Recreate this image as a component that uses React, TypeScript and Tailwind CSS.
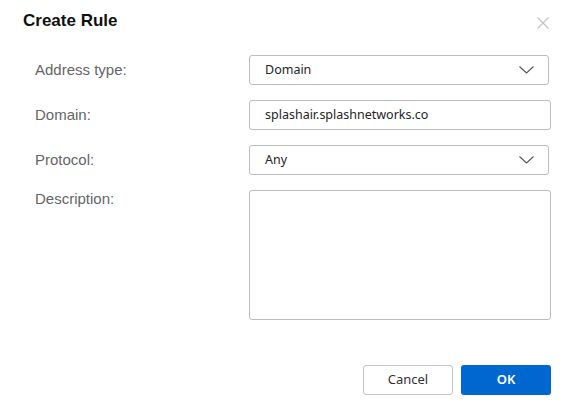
function Chevron() {
  return (
    <svg width="15" height="8" viewBox="0 0 15 8" fill="none" className="shrink-0">
      <path d="M0.5 0.5 L7.5 7 L14.5 0.5" stroke="#555" strokeWidth="1.1" />
    </svg>
  );
}

function Select({ value }: { value: string }) {
  return (
    <div className="flex h-[30px] w-[300px] items-center justify-between rounded-[3px] border border-[#bdbdbd] pl-[15px] pr-[14px] text-[12.5px] text-[#252525]">
      <span>{value}</span>
      <Chevron />
    </div>
  );
}

function Label({ children, top }: { children: string; top?: boolean }) {
  return (
    <div
      className={
        "w-[249px] shrink-0 pl-[35px] text-[15px] text-[#666] font-['Liberation_Sans',Arial,sans-serif] " +
        (top ? "leading-[18px]" : "leading-[30px]")
      }
    >
      {children}
    </div>
  );
}

export default function App() {
  return (
    <div className="h-[416px] w-[573px] bg-white font-['Noto_Sans',sans-serif]">
      <div className="flex items-start justify-between pl-[23px] pr-[24px] pt-[12px]">
        <h1 className="text-[17px] font-bold leading-[18px] text-[#111] font-['Liberation_Sans',Arial,sans-serif]">
          Create Rule
        </h1>
        <svg width="12" height="12" viewBox="0 0 12 12" className="mt-[5px]">
          <path d="M0.5 0.5 L11.5 11.5 M11.5 0.5 L0.5 11.5" stroke="#c2c2c2" strokeWidth="1.1" />
        </svg>
      </div>

      <div className="mt-[25px] flex flex-col gap-[15px]">
        <div className="flex items-center">
          <Label>Address type:</Label>
          <Select value="Domain" />
        </div>
        <div className="flex items-center">
          <Label>Domain:</Label>
          <div className="flex h-[30px] w-[302px] items-center rounded-[3px] border border-[#bdbdbd] pl-[15px] text-[12.5px] text-[#252525]">
            splashair.splashnetworks.co
          </div>
        </div>
        <div className="flex items-center">
          <Label>Protocol:</Label>
          <Select value="Any" />
        </div>
        <div className="flex items-start">
          <Label top>Description:</Label>
          <div className="h-[130px] w-[302px] rounded-[3px] border border-[#bdbdbd]" />
        </div>
      </div>

      <div className="mt-[45px] flex justify-end gap-[8px] pr-[22px]">
        <button className="h-[30px] w-[90px] rounded-[3px] border border-[#c4c4c4] bg-white text-[13px] text-[#333]">
          Cancel
        </button>
        <button className="h-[30px] w-[90px] rounded-[3px] bg-[#0067d1] text-[13px] font-semibold text-white">
          OK
        </button>
      </div>
    </div>
  );
}
